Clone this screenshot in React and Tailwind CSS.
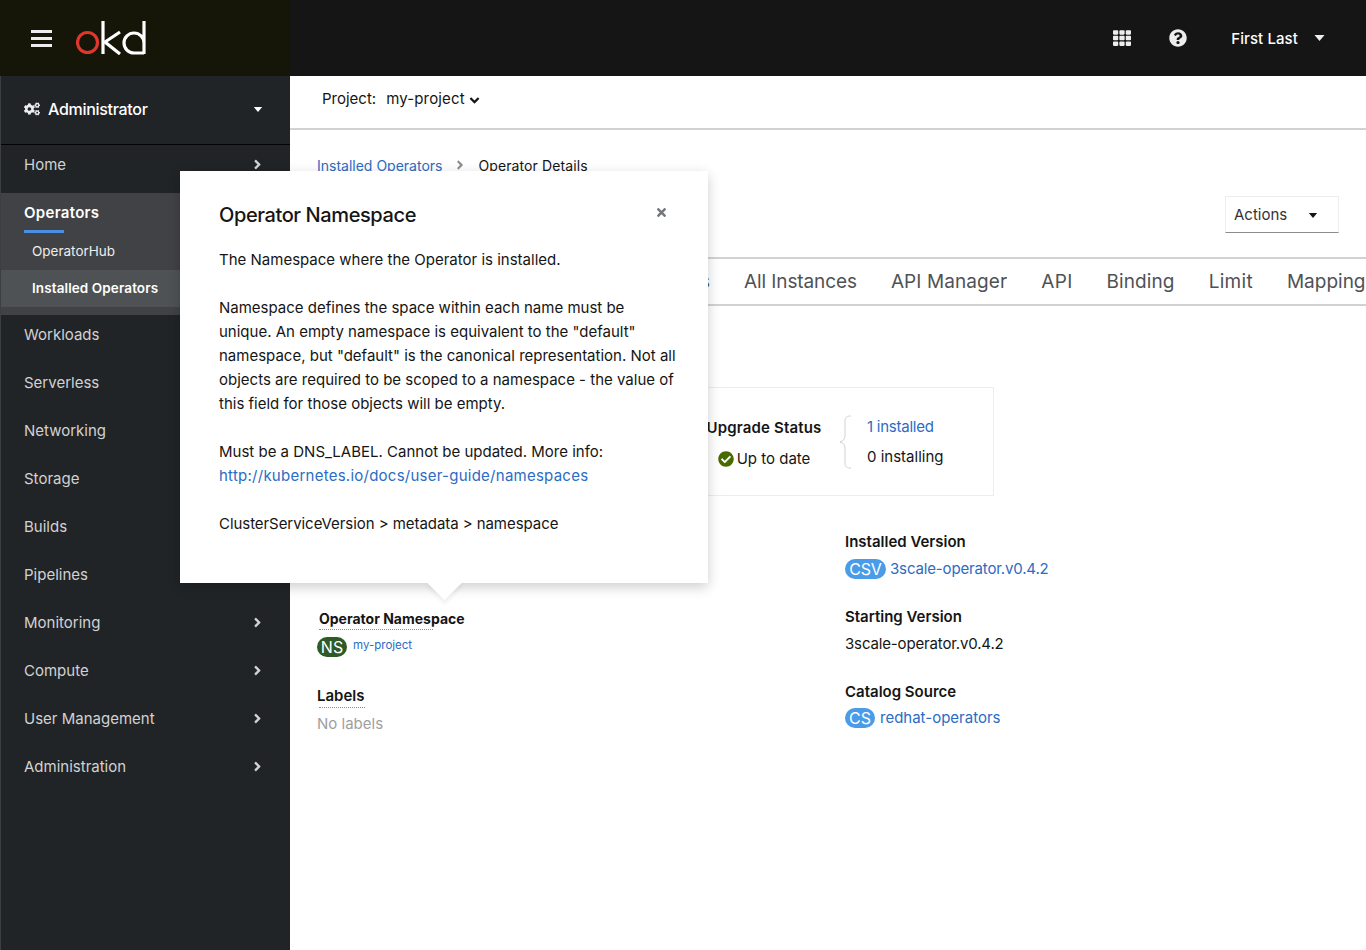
import React from 'react';
import { FaAngleRight, FaAngleDown, FaTimes, FaTh, FaQuestionCircle, FaCogs, FaCheckCircle } from 'react-icons/fa';

const FONT = "font-['Inter','Noto_Sans',sans-serif]";

const navMiddle = ['Workloads', 'Serverless', 'Networking', 'Storage', 'Builds', 'Pipelines', 'Monitoring', 'Compute', 'User Management', 'Administration'];

const Caret = ({ className }) => (
  <svg viewBox="0 0 10 6" className={className} fill="currentColor"><path d="M0 0h10L5 6z" /></svg>
);

const Logo = () => (
  <svg viewBox="0 0 70 34" className="w-[70px] h-[34px]" fill="none" strokeWidth="3.2">
    <circle cx="11.5" cy="21.5" r="10" stroke="#e0362c" />
    <path d="M27 0v33" stroke="#fff" />
    <path d="M44 11 L29 21 L44 33" stroke="#fff" />
    <path d="M68 0v33M68 22a10 10 0 1 0-10 10h10" stroke="#fff" />
  </svg>
);

const NavItem = ({ label, chevron }) => (
  <div className="h-12 flex items-center justify-between pl-[23px] pr-[25px] pb-[8px] text-[15px] text-[#d2d2d2]">
    <span>{label}</span>
    {chevron && <FaAngleRight size={15} className="text-[#d2d2d2] mt-[-2px]" />}
  </div>
);

const Badge = ({ children, color, w }) => (
  <span className={`inline-flex items-center justify-center h-[20px] rounded-full text-white text-[16px] leading-none ${color} ${w}`}>{children}</span>
);

const DetailTitle = ({ children }) => <div className="text-[15px] font-semibold text-[#151515] leading-5">{children}</div>;

export default function App() {
  return (
    <div className={`relative h-[950px] w-[1366px] overflow-hidden bg-white ${FONT}`}>
      <header className="flex h-[76px]">
        <div className="w-[290px] bg-[#151508] flex items-center pl-[31px]">
          <div className="flex flex-col gap-[4px] w-[21px]">
            <span className="h-[3px] bg-[#ededed]" />
            <span className="h-[3px] bg-[#ededed]" />
            <span className="h-[3px] bg-[#ededed]" />
          </div>
          <div className="ml-[24px]"><Logo /></div>
        </div>
        <div className="flex-1 bg-[#151515] flex items-center justify-end pr-[41px] text-white">
          <FaTh size={18} className="text-[#ededed]" />
          <FaQuestionCircle size={18} className="ml-[38px] text-[#ededed]" />
          <span className="ml-[44px] mt-[2px] text-[15px] font-medium tracking-[0.1px]">First Last</span>
          <Caret className="w-[11px] h-[6px] ml-[16px] text-[#ededed]" />
        </div>
      </header>

      <div className="flex h-[874px]">
        <aside className="w-[290px] shrink-0 bg-[#212427] border-l-[1px] border-[#3c3f42]">
          <div className="h-[69px] border-b border-[#030303] flex items-center justify-between pl-[23px] pb-[2px] pr-[27px] text-white">
            <div className="flex items-center gap-[8px] text-[16px] font-medium tracking-[-0.3px]">
              <FaCogs size={16} className="text-[#ededed]" />
              Administrator
            </div>
            <Caret className="w-[10px] h-[5px] text-white" />
          </div>
          <NavItem label="Home" chevron />
          <div className="bg-[#404246] h-[122px]">
            <div className="pl-[23px] pt-[10px] text-[15px] font-semibold text-white leading-5 tracking-[0.3px]">Operators</div>
            <div className="ml-[23px] mt-[7px] w-10 h-[3px] bg-[#4a90e2]" />
            <div className="h-[37px] flex items-center pl-[31px] text-[13.5px] text-[#ededed]">OperatorHub</div>
            <div className="h-[37px] flex items-center pl-[31px] text-[13.5px] font-semibold text-white bg-[#4f5255] tracking-[0.1px]">Installed Operators</div>
          </div>
          {navMiddle.map((n, i) => <NavItem key={n} label={n} chevron={i > 5} />)}
        </aside>

        <main className="flex-1 min-w-0 overflow-hidden text-[#151515]">
          <div className="h-[54px] border-b-2 border-[#d2d2d2] flex items-center pl-[32px] pb-[5px] text-[15px]">
            <span>Project:</span>
            <span className="ml-[10px] tracking-[0.15px]">my-project</span>
            <FaAngleDown size={15} className="ml-[2px] mt-[2px]" />
          </div>

          <div className="h-[75px] pl-[27px] pr-[27px] pt-[25px] flex justify-between">
            <div className="flex items-center gap-[11px] h-[20px] text-[14px]">
              <span className="text-[#2b6cc4]">Installed Operators</span>
              <FaAngleRight size={14} className="text-[#8b8d8f]" />
              <span className="tracking-[0.1px]">Operator Details</span>
            </div>
            <div className="mt-[41px] w-[114px] h-[37px] bg-white border border-[#ededed] border-b-[#8b8d8f] flex items-center justify-between pl-2 pr-5 pt-[1px] text-[15px] text-[#333]">
              Actions
              <Caret className="w-[10px] h-[5px] text-[#151515]" />
            </div>
          </div>

          <div className="mt-[52px] h-[49px] border-y-2 border-[#d2d2d2] flex items-center gap-[34px] pl-[358px] pt-[2px] text-[19px] text-[#4f5255] whitespace-nowrap">
            <span className="w-[62px] shrink-0 text-right">Events</span>
            <span className="tracking-[-0.1px]">All Instances</span>
            <span className="tracking-[0.1px]">API Manager</span>
            <span className="tracking-[0.3px]">API</span>
            <span className="tracking-[0.1px]">Binding</span>
            <span className="tracking-[0.3px]">Limit</span>
            <span>Mapping</span>
          </div>

          <div className="mt-[81px] ml-[27px] w-[677px] h-[109px] border border-[#ededed] flex items-center justify-end">
            <div className="flex flex-col items-center w-[130px] pt-[3px]">
              <div className="text-[15px] font-semibold leading-6 tracking-[0.15px]">Upgrade Status</div>
              <div className="flex items-center gap-[3px] mt-[7px] text-[15px] leading-6">
                <FaCheckCircle size={16} className="text-[#486b00]" />
                Up to date
              </div>
            </div>
            <svg viewBox="0 0 14 54" className="w-[14px] h-[54px] ml-[9px]" fill="none" stroke="#d2d2d2">
              <path d="M13 1c-4 0-6 1-6 5v15c0 3-2 5-5 6 3 1 5 3 5 6v15c0 4 2 5 6 5" />
            </svg>
            <div className="ml-[15px] w-[126px] text-[15px] leading-[30px]">
              <div className="text-[#2b6cc4] tracking-[-0.25px]">1 installed</div>
              <div>0 installing</div>
            </div>
          </div>

          <div className="ml-[27px] grid grid-cols-[528px_1fr]">
            <div className="pt-[113px]">
              <div className="ml-[2px] text-[14px] font-bold leading-5">Operator Namespace</div>
              <div className="ml-[2px] w-[114px] border-b border-dotted border-[#8b8d8f]" />
              <div className="flex items-center gap-[6px] mt-[7px] text-[11.5px] text-[#2b6cc4]">
                <Badge color="bg-[#2d5a27]" w="w-[30px]">NS</Badge>
                <span className="mb-[3px]">my-project</span>
              </div>
              <div className="mt-[29px]"><DetailTitle>Labels</DetailTitle></div>
              <div className="ml-[2px] mt-[1px] w-[46px] border-b border-dotted border-[#8b8d8f]" />
              <div className="text-[15px] text-[#a0a0a0] leading-6 mt-[4px]">No labels</div>
            </div>
            <div className="pt-[36px] flex flex-col gap-[28px]">
              <div>
                <DetailTitle>Installed Version</DetailTitle>
                <div className="flex items-center gap-[4px] mt-[7px] text-[15px] leading-5 text-[#2b6cc4] tracking-[-0.15px]">
                  <Badge color="bg-[#4a9be8]" w="w-[41px]">CSV</Badge>
                  3scale-operator.v0.4.2
                </div>
              </div>
              <div>
                <DetailTitle>Starting Version</DetailTitle>
                <div className="mt-[7px] text-[15px] leading-5 tracking-[-0.15px]">3scale-operator.v0.4.2</div>
              </div>
              <div>
                <DetailTitle>Catalog Source</DetailTitle>
                <div className="flex items-center gap-[5px] mt-[6px] text-[15px] leading-5 text-[#2b6cc4]">
                  <Badge color="bg-[#4a9be8]" w="w-[30px]">CS</Badge>
                  redhat-operators
                </div>
              </div>
            </div>
          </div>
        </main>
      </div>

      {/* popover over the page */}
      <div className="absolute left-[180px] top-[171px] w-[528px] h-[412px] bg-white shadow-[0_4px_12px_rgba(3,3,3,0.2)] pl-[39px] pt-[32px] text-[#151515]">
        <div className="text-[20px] font-medium leading-6 tracking-[-0.4px]">Operator Namespace</div>
        <FaTimes size={13} className="absolute top-[35px] right-[40px] text-[#72767b]" />
        <div className="mt-[21px] text-[15px] leading-6 whitespace-nowrap">
          <p>The Namespace where the Operator is installed.</p>
          <p className="mt-6">
            Namespace defines the space within each name must be<br />
            unique. An empty namespace is equivalent to the "default"<br />
            namespace, but "default" is the canonical representation. Not all<br />
            objects are required to be scoped to a namespace - the value of<br />
            this field for those objects will be empty.
          </p>
          <p className="mt-6">
            Must be a DNS_LABEL. Cannot be updated. More info:<br />
            <span className="text-[#2b6cc4] tracking-[0.25px]">http://kubernetes.io/docs/user-guide/namespaces</span>
          </p>
          <p className="mt-6 tracking-[-0.06px]">ClusterServiceVersion &gt; metadata &gt; namespace</p>
        </div>
        <div className="absolute left-[252px] bottom-[-12px] w-[25px] h-[25px] rotate-45 bg-white shadow-[3px_3px_4px_rgba(3,3,3,0.06)]" />
      </div>
    </div>
  );
}
